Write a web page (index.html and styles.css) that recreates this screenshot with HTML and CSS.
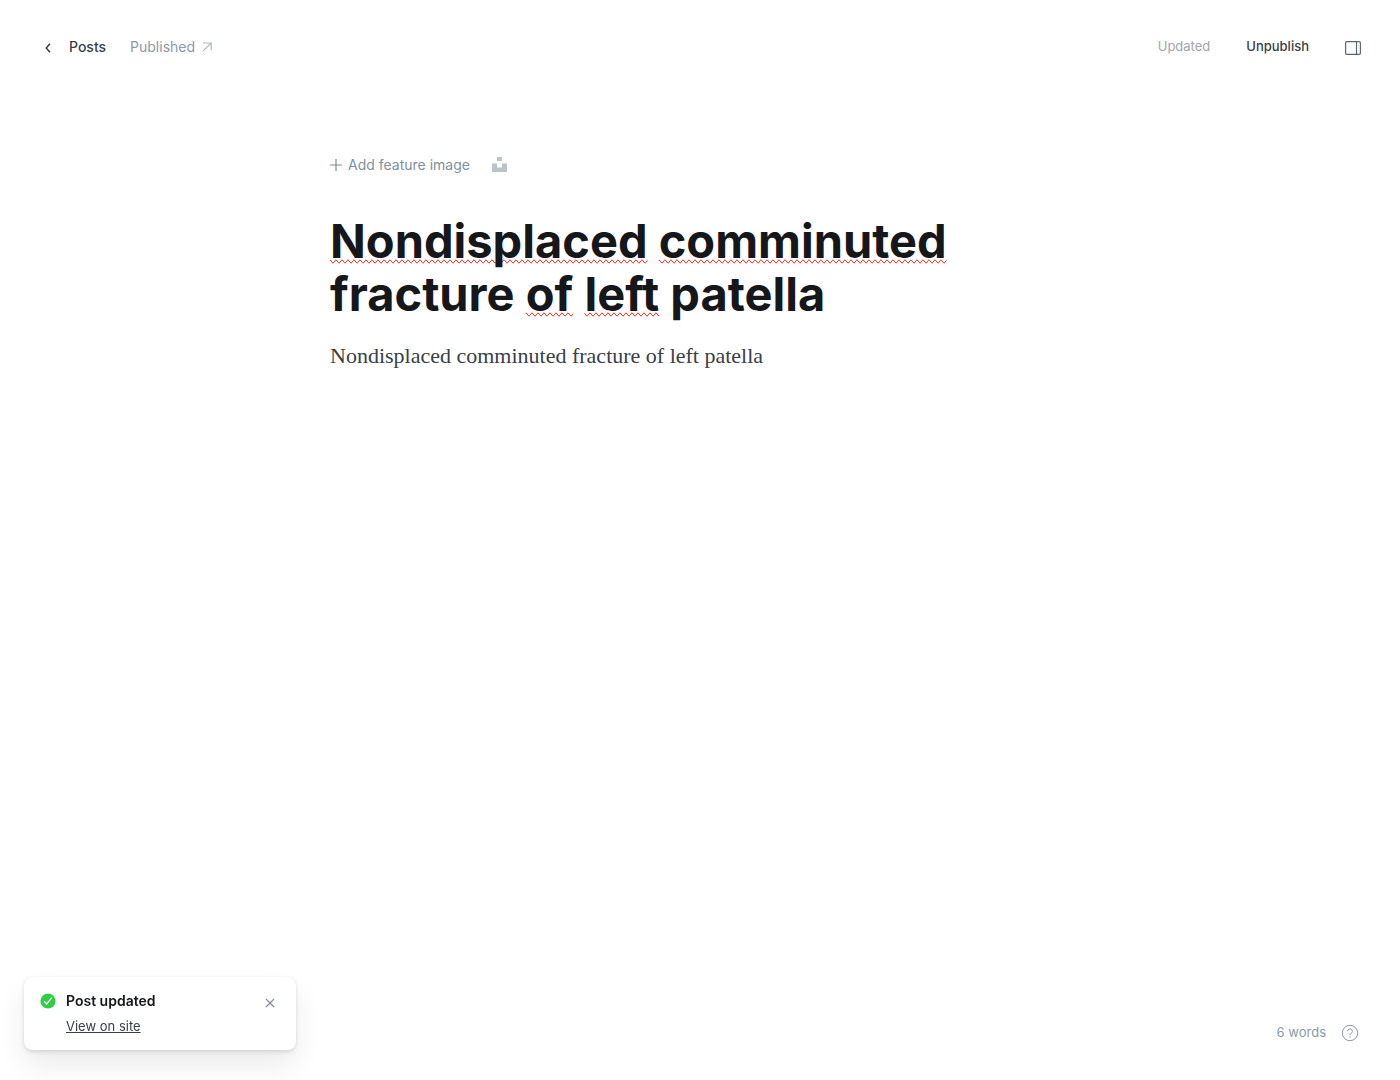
FILE: index.html
```html
<!DOCTYPE html>
<html lang="en">
<head>
<meta charset="utf-8">
<meta name="viewport" content="width=device-width, initial-scale=1">
<title>Edit post</title>
<link rel="stylesheet" href="styles.css">
</head>
<body>
<div class="editor">
  <header class="topbar">
    <nav class="topbar-group">
      <a class="back" href="#posts">
        <svg class="icon-back" width="6" height="10" viewBox="0 0 6 10" fill="none" stroke="#30363d" stroke-width="1.4" aria-hidden="true"><path d="M5 .8 1.2 5 5 9.2"/></svg>
        Posts
      </a>
      <a class="status" href="#view">
        Published
        <svg width="10" height="10" viewBox="0 0 10 10" fill="none" stroke="#aeb7c1" stroke-width="1.2" aria-hidden="true"><path d="M1 1h8.2v7.6M9.2 1 .6 9.4"/></svg>
      </a>
    </nav>
    <div class="topbar-actions">
      <span class="saved">Updated</span>
      <button class="unpublish" type="button">Unpublish</button>
      <button class="panel-toggle" type="button" aria-label="Settings">
        <svg width="16" height="14" viewBox="0 0 16 14" fill="none" stroke="#5d656e" stroke-width="1.2" aria-hidden="true"><rect x=".6" y=".6" width="14.8" height="12.8" rx="1.2"/><path d="M11.5.6v12.8"/></svg>
      </button>
    </div>
  </header>

  <main class="post">
    <div class="feature">
      <button class="add-image" type="button">
        <svg width="12" height="12" viewBox="0 0 12 12" fill="none" stroke="#7c8b9a" stroke-width="1.2" aria-hidden="true"><path d="M6 0v12M0 6h12"/></svg>
        Add feature image
      </button>
      <button class="unsplash" type="button" aria-label="Choose from Unsplash">
        <svg width="15" height="15" viewBox="0 0 15 15" fill="#bbc3ca" aria-hidden="true"><path d="M5 0h5v4H5zM0 6.5h5v4h5v-4h5V15H0z"/></svg>
      </button>
    </div>
    <h1 class="title" contenteditable="true" spellcheck="false"><span class="misspelt">Nondisplaced</span> <span class="misspelt">comminuted</span> fracture <span class="misspelt">of</span> <span class="misspelt">left</span> patella</h1>
    <div class="body" contenteditable="true" spellcheck="false"><p>Nondisplaced comminuted fracture of left patella</p></div>
  </main>

  <footer class="wordcount">
    <span>6 words</span>
    <a class="help" href="#help" aria-label="Help">
      <svg width="18" height="18" viewBox="0 0 18 18" fill="none" stroke="#8c99a6" stroke-width="1" aria-hidden="true"><circle cx="9" cy="9" r="7.7"/><path d="M6.6 7.3a2.4 2.4 0 1 1 3.6 2.1c-.8.4-1.2.8-1.2 1.6v.2"/><circle cx="9" cy="12.9" r=".3"/></svg>
    </a>
  </footer>

  <aside class="toast" role="status">
    <svg class="toast-icon" width="16" height="16" viewBox="0 0 16 16" fill="none" aria-hidden="true"><circle cx="8" cy="8" r="7.6" fill="#30cf43"/><path d="m4.4 8.5 2.3 2.4 4.9-6" stroke="#fff" stroke-width="1.4" stroke-linecap="round" stroke-linejoin="round"/></svg>
    <div class="toast-text">
      <strong class="toast-title">Post updated</strong>
      <a class="toast-link" href="#view">View on site</a>
    </div>
    <button class="toast-close" type="button" aria-label="Close">
      <svg width="10" height="10" viewBox="0 0 10 10" fill="none" stroke="#7c8b9a" stroke-width="1.1" aria-hidden="true"><path d="m1 1 8 8M9 1 1 9"/></svg>
    </button>
  </aside>
</div>
</body>
</html>
```
FILE: styles.css
```css
* {
  box-sizing: border-box;
}

body {
  margin: 0;
  background: #fff;
  color: #15171a;
  font-family: Inter, "Liberation Sans", sans-serif;
  font-size: 14px;
  line-height: 20px;
}

a {
  color: inherit;
  text-decoration: none;
}

button {
  padding: 0;
  border: 0;
  background: none;
  color: inherit;
  font: inherit;
  cursor: pointer;
}

svg {
  display: block;
}

.editor {
  display: flex;
  flex-direction: column;
  min-height: 100vh;
}

.topbar {
  display: flex;
  align-items: flex-start;
  justify-content: space-between;
  padding: 37px 39px 0 45px;
}

.topbar-group,
.back,
.status,
.feature,
.add-image,
.wordcount {
  display: flex;
  align-items: center;
}

.topbar-actions {
  display: flex;
  align-items: flex-end;
}

.topbar-group {
  gap: 24px;
}

.back {
  gap: 18px;
  color: #394047;
  font-weight: 500;
}

.icon-back {
  margin-top: 2px;
}

.status {
  gap: 7px;
  color: #8c99a6;
}

.topbar-actions {
  gap: 36px;
  font-size: 13px;
  line-height: 18px;
}

.saved {
  color: #a0a6ad;
}

.unpublish {
  color: #394047;
  font-weight: 500;
}

.panel-toggle {
  padding-top: 4px;
}

.post {
  flex: 1;
  width: 100%;
  max-width: 740px;
  margin: 0 auto;
  padding-top: 98px;
}

.feature {
  align-items: flex-start;
  gap: 22px;
}

.add-image {
  gap: 6px;
  color: #8190a0;
}

.unsplash {
  padding-top: 2px;
}

.title {
  margin: 39px 0 0;
  font-size: 47px;
  font-weight: 700;
  line-height: 53px;
  outline: 0;
}

.misspelt {
  text-decoration-line: spelling-error;
}

.body {
  margin-top: 20px;
  color: #394047;
  font-family: Georgia, "Liberation Serif", serif;
  font-size: 22px;
  line-height: 32px;
  outline: 0;
}

.body p {
  margin: 0;
}

.wordcount {
  justify-content: flex-end;
  gap: 15px;
  padding: 0 41px 38px;
  color: #8c99a6;
  font-size: 13px;
}

.help {
  padding-top: 1px;
}

.toast {
  position: fixed;
  bottom: 30px;
  left: 24px;
  display: flex;
  align-items: flex-start;
  gap: 10px;
  width: 272px;
  padding: 14px 21px 14px 16px;
  border-radius: 8px;
  background: #fff;
  box-shadow: 0 0 1px rgba(0, 0, 0, 0.12), 0 2px 5px rgba(0, 0, 0, 0.12), 0 16px 28px rgba(0, 0, 0, 0.08);
}

.toast-icon {
  margin-top: 2px;
}

.toast-text {
  display: flex;
  flex: 1;
  flex-direction: column;
  gap: 5px;
}

.toast-title {
  font-weight: 600;
}

.toast-link {
  align-self: flex-start;
  color: #394047;
  font-size: 13px;
  text-decoration: underline;
}

.toast-close {
  margin-top: 7px;
}
```
